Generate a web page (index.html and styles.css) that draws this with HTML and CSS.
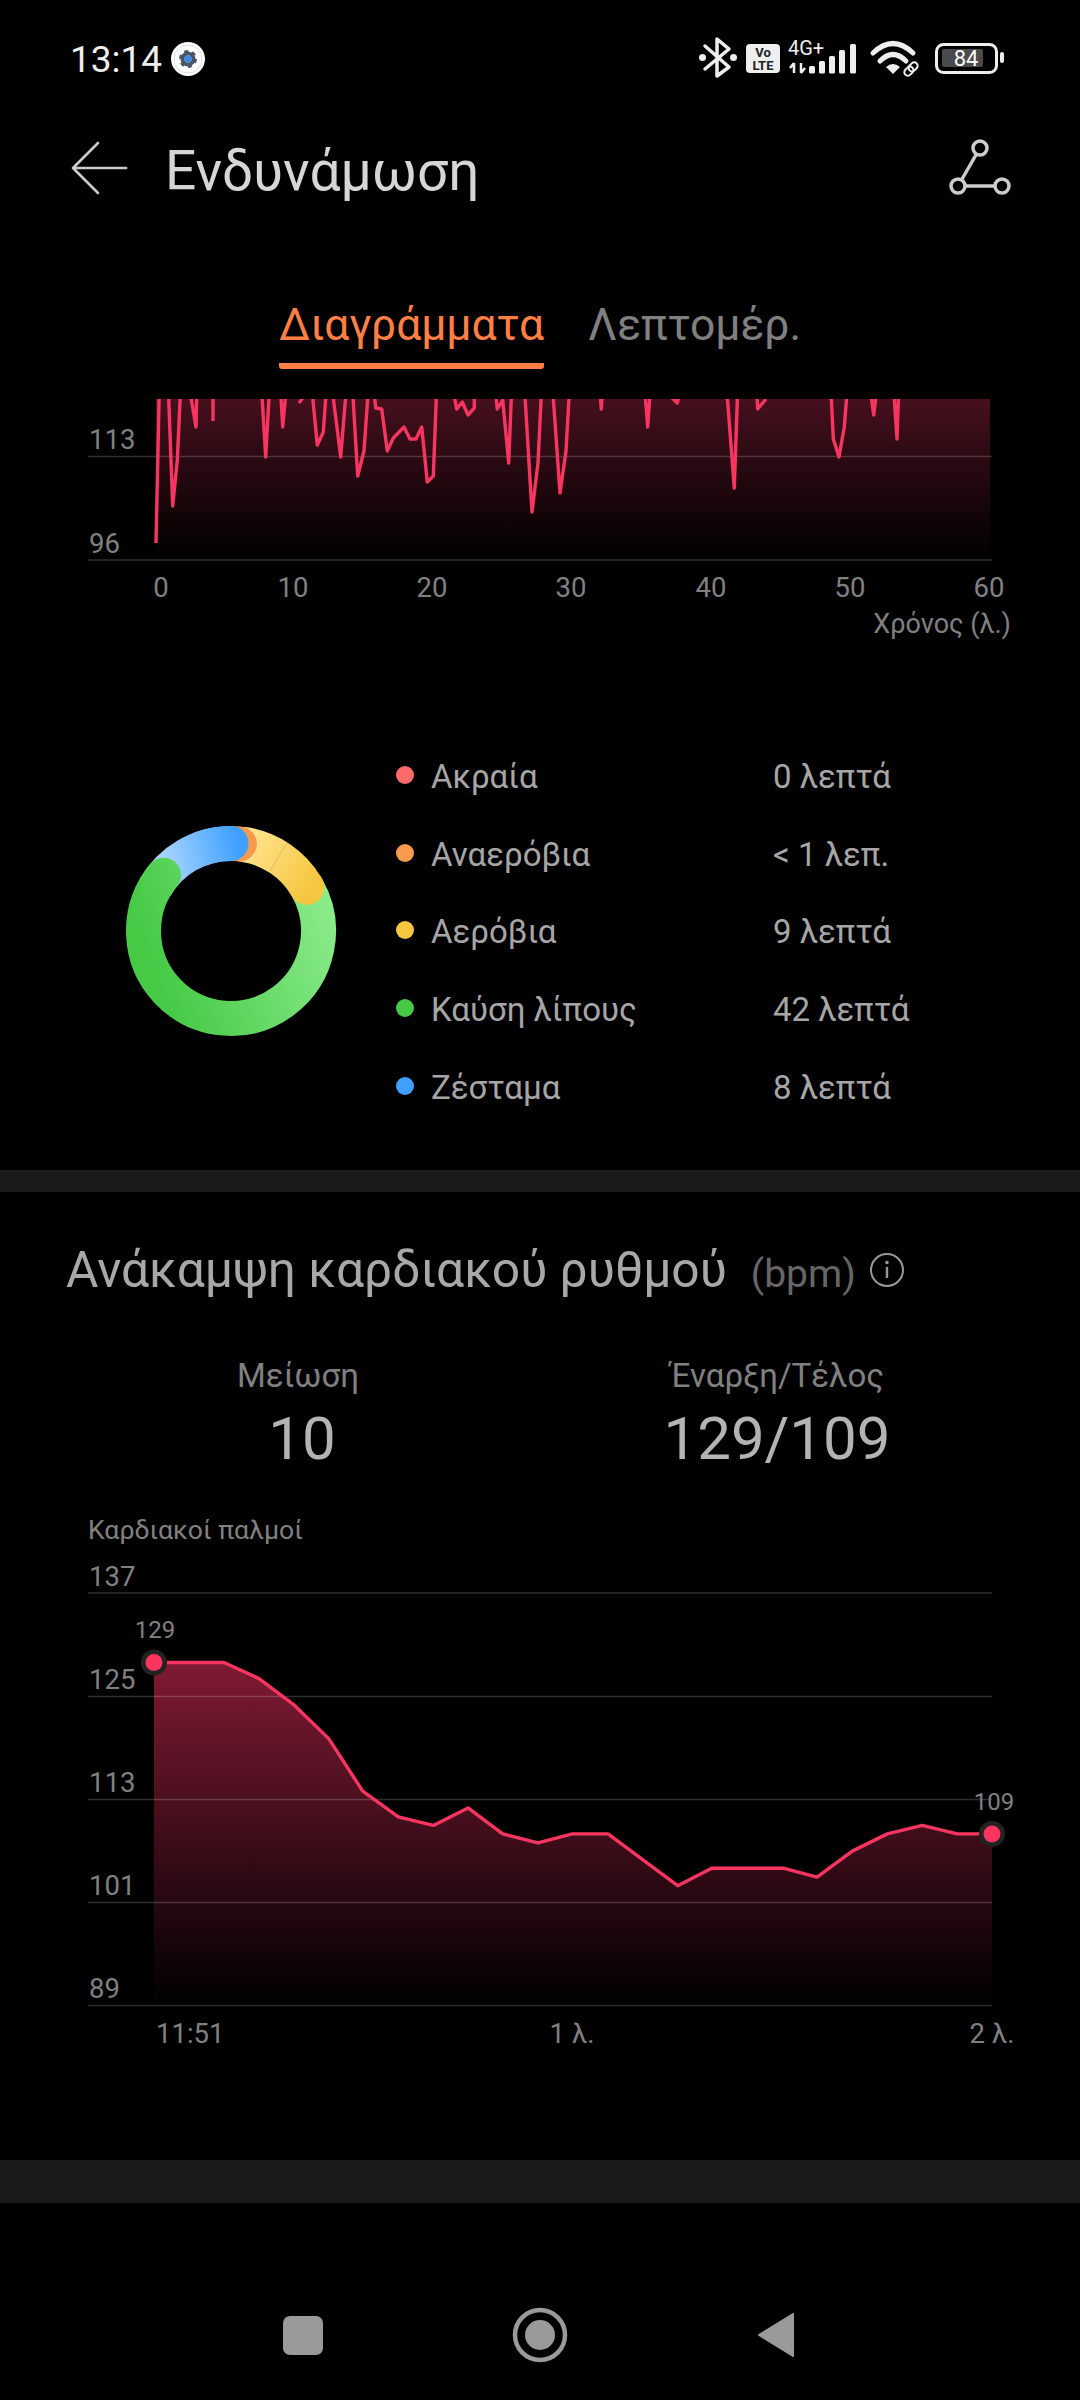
FILE: index.html
```html
<!DOCTYPE html>
<html lang="el">
<head>
    <meta charset="UTF-8">
    <meta name="viewport" content="width=device-width, initial-scale=1.0">
    <title>Ενδυνάμωση</title>
    <link rel="stylesheet" href="styles.css">
</head>
<body>
    <div class="status-bar">
        <span class="clock">13:14</span>
        <svg class="gear" width="36" height="36" viewBox="0 0 36 36">
            <circle cx="18" cy="18" r="17" fill="#fff"/>
            <circle cx="18" cy="18" r="14" fill="none" stroke="#ddd" stroke-width="1"/>
            <circle cx="18" cy="18" r="5.5" fill="none" stroke="#4a5568" stroke-width="4"/>
            <circle cx="18" cy="18" r="7.5" fill="none" stroke="#4a5568" stroke-width="3" stroke-dasharray="3.9 3.95"/>
            <circle cx="18" cy="18" r="3.8" fill="#3f8ae0"/>
        </svg>
        <svg class="status-icons" width="320" height="60" viewBox="690 30 320 60">
            <!-- bluetooth -->
            <path d="M705 47 L729 68 L717 77 L717 40 L729 50 L705 70" fill="none" stroke="#eee" stroke-width="3.5" stroke-linejoin="round" stroke-linecap="round"/>
            <circle cx="702.5" cy="58.5" r="3.5" fill="#eee"/>
            <circle cx="733.5" cy="58.5" r="3.5" fill="#eee"/>
            <!-- volte -->
            <rect x="746" y="45" width="34" height="29" rx="4" fill="#eee"/>
            <text x="763" y="58" class="volte">Vo</text>
            <text x="763" y="71" class="volte">LTE</text>
            <!-- signal -->
            <text x="788" y="56" class="net">4G+</text>
            <path d="M794 64 V74 M790 69 L794 64 M801 64 V74 M801 74 L805 69" fill="none" stroke="#eee" stroke-width="2.5"/>
            <rect x="809" y="67" width="6" height="7.5" rx="1.5" fill="#eee"/>
            <rect x="819" y="62" width="6" height="12.5" rx="1.5" fill="#eee"/>
            <rect x="829" y="57" width="6" height="17.5" rx="1.5" fill="#eee"/>
            <rect x="839" y="51" width="6" height="23.5" rx="1.5" fill="#eee"/>
            <rect x="850" y="45" width="6" height="29.5" rx="1.5" fill="#eee"/>
            <!-- wifi -->
            <path d="M873 54 Q893 35 913 54" fill="none" stroke="#eee" stroke-width="5" stroke-linecap="round"/>
            <path d="M880 62 Q893 49 906 62" fill="none" stroke="#eee" stroke-width="5" stroke-linecap="round"/>
            <path d="M886 68 Q893 62 900 68 L893 75 Z" fill="#eee"/>
            <g transform="rotate(-45 911 70)" fill="none" stroke="#eee" stroke-width="2">
                <rect x="903" y="66.5" width="10" height="7" rx="3.5"/>
                <rect x="909" y="66.5" width="10" height="7" rx="3.5"/>
            </g>
            <!-- battery -->
            <rect x="936.5" y="45.5" width="60" height="28" rx="7" fill="none" stroke="#eee" stroke-width="3"/>
            <rect x="942" y="50" width="41" height="18" rx="2" fill="#4a4a4a"/>
            <text x="966" y="67" class="batt">84</text>
            <rect x="1000" y="53" width="4" height="11" rx="2" fill="#eee"/>
        </svg>
    </div>

    <div class="app-bar">
        <svg width="60" height="56" viewBox="0 0 60 56">
            <path d="M28 3 L3 28 L28 53 M3 28 H56" fill="none" stroke="#ccc" stroke-width="2.6" stroke-linecap="round" stroke-linejoin="round"/>
        </svg>
        <h1 class="page-title">Ενδυνάμωση</h1>
        <svg class="route" width="66" height="60" viewBox="0 0 66 60">
            <circle cx="33" cy="10" r="7" fill="none" stroke="#ccc" stroke-width="3.5"/>
            <circle cx="11" cy="48" r="7" fill="none" stroke="#ccc" stroke-width="3.5"/>
            <circle cx="55" cy="48" r="7" fill="none" stroke="#ccc" stroke-width="3.5"/>
            <path d="M29.5 16 L14.5 42 M18 48 H48" fill="none" stroke="#ccc" stroke-width="3.5"/>
        </svg>
    </div>

    <div class="tabs">
        <div class="tab active">Διαγράμματα</div>
        <div class="tab">Λεπτομέρ.</div>
    </div>

    <svg class="chart-top" width="1080" height="251" viewBox="0 399 1080 251">
        <defs>
            <linearGradient id="fillTop" x1="0" y1="399" x2="0" y2="560" gradientUnits="userSpaceOnUse">
                <stop offset="0" stop-color="#45101d"/>
                <stop offset="1" stop-color="#000"/>
            </linearGradient>
        </defs>
        <rect x="156" y="399" width="834" height="161" fill="url(#fillTop)"/>
        <line x1="88" y1="456.5" x2="992" y2="456.5" class="grid"/>
        <line x1="88" y1="560" x2="992" y2="560" class="grid"/>
        <path class="hr-line" d="M156 543 L159.5 380
            M168 380 L172.7 506 L177.3 460 L181 380
            M188 380 L196 427 L197 380
            M213 380 L213 421
            M261 380 L265.7 457 L270 380
            M280 380 L282.7 427 L287 380
            M299 403 L304 396
            M311 380 L317.3 445 L323.3 432 L327 380
            M331 380 L340.7 457 L347 380
            M352 380 L357.7 476 L364 451 L369 380
            M373 380 L375.7 408 L381.7 409 L387.3 451 L393.3 438 L404 427 L410 439 L416 439 L421.7 427 L427.3 482 L433.3 476 L437 380
            M453 390 L456.7 409 L462.3 402 L468 415 L474.3 408 L474.3 380
            M494 380 L497.3 409 L502.7 400 L508.7 463 L512 380
            M524 380 L532 512 L538 463 L542 380
            M552 380 L560 493 L566 451 L570 380
            M599 380 L601.3 409 L603 380
            M644 380 L647.7 427 L651 380
            M670 396 L677.3 403 L679 396
            M726 380 L734.3 488 L738 380
            M756 380 L757.7 409 L766 399
            M830.5 380 L833.3 439 L839 457 L844.3 427 L848 380
            M869 380 L873.7 415 L878 380
            M893 380 L897 439 L899 380"/>
        <text x="89" y="449" class="axis">113</text>
        <text x="89" y="553" class="axis">96</text>
        <text x="161" y="597" class="axis mid">0</text>
        <text x="293" y="597" class="axis mid">10</text>
        <text x="432" y="597" class="axis mid">20</text>
        <text x="571" y="597" class="axis mid">30</text>
        <text x="711" y="597" class="axis mid">40</text>
        <text x="850" y="597" class="axis mid">50</text>
        <text x="989" y="597" class="axis mid">60</text>
        <text x="1011" y="633" class="axis axis-title end">Χρόνος (λ.)</text>
    </svg>

    <div class="zones">
        <svg class="donut" width="220" height="220" viewBox="121 821 220 220">
            <defs>
                <linearGradient id="greenArc" x1="330" y1="860" x2="140" y2="930" gradientUnits="userSpaceOnUse">
                    <stop offset="0" stop-color="#90ee90"/>
                    <stop offset="1" stop-color="#46ca46"/>
                </linearGradient>
                <linearGradient id="blueArc" x1="165" y1="870" x2="240" y2="850" gradientUnits="userSpaceOnUse">
                    <stop offset="0" stop-color="#a9d6ff"/>
                    <stop offset="1" stop-color="#3fa0ff"/>
                </linearGradient>
                <linearGradient id="yellowArc" x1="245" y1="845" x2="310" y2="890" gradientUnits="userSpaceOnUse">
                    <stop offset="0" stop-color="#ffe38d"/>
                    <stop offset="1" stop-color="#f6c640"/>
                </linearGradient>
            </defs>
            <path d="M155.2 887.25 A87.5 87.5 0 0 1 231 843.5" class="arc" stroke="url(#blueArc)"/>
            <path d="M306.8 887.25 A87.5 87.5 0 1 1 163.6 875.2" class="arc round" stroke="url(#greenArc)"/>
            <path d="M243.2 844.4 A87.5 87.5 0 0 1 306.8 887.25" class="arc round" stroke="url(#yellowArc)"/>
            <line x1="270" y1="870.7" x2="287.3" y2="842.7" stroke="#8f7a3a" stroke-width="0.7" stroke-opacity="0.4"/>
            <path d="M231 843.5 A87.5 87.5 0 0 1 239.4 843.9" class="arc round" stroke="#f79a50"/>
            <path d="M201.1 848.8 A87.5 87.5 0 0 1 231 843.5" class="arc round" stroke="url(#blueArc)"/>
        </svg>
        <ul class="legend">
            <li class="legend-row"><span class="dot dot-red"></span><span class="zone-name">Ακραία</span><span class="zone-time">0 λεπτά</span></li>
            <li class="legend-row"><span class="dot dot-orange"></span><span class="zone-name">Αναερόβια</span><span class="zone-time">&lt; 1 λεπ.</span></li>
            <li class="legend-row"><span class="dot dot-yellow"></span><span class="zone-name">Αερόβια</span><span class="zone-time">9 λεπτά</span></li>
            <li class="legend-row"><span class="dot dot-green"></span><span class="zone-name">Καύση λίπους</span><span class="zone-time">42 λεπτά</span></li>
            <li class="legend-row"><span class="dot dot-blue"></span><span class="zone-name">Ζέσταμα</span><span class="zone-time">8 λεπτά</span></li>
        </ul>
    </div>

    <div class="divider"></div>

    <div class="recovery">
        <div class="section-head">
            <h2 class="section-title">Ανάκαμψη καρδιακού ρυθμού</h2>
            <span class="unit">(bpm)</span>
            <svg class="info" width="36" height="36" viewBox="0 0 36 36">
                <circle cx="18" cy="18" r="16" fill="none" stroke="#999" stroke-width="2"/>
                <circle cx="18" cy="10.5" r="1.8" fill="#999"/>
                <path d="M18 15 V26" stroke="#999" stroke-width="2.4"/>
            </svg>
        </div>
        <div class="stats">
            <div class="stat stat-left">
                <div class="stat-label">Μείωση</div>
                <div class="stat-value">10</div>
            </div>
            <div class="stat stat-right">
                <div class="stat-label">Έναρξη/Τέλος</div>
                <div class="stat-value">129/109</div>
            </div>
        </div>
        <div class="chart-label">Καρδιακοί παλμοί</div>
        <svg class="chart-bottom" width="1080" height="510" viewBox="0 1550 1080 510">
            <defs>
                <linearGradient id="fillBottom" x1="0" y1="1662" x2="0" y2="2005" gradientUnits="userSpaceOnUse">
                    <stop offset="0" stop-color="#7f1a33"/>
                    <stop offset="1" stop-color="#000"/>
                </linearGradient>
            </defs>
            <path fill="url(#fillBottom)" d="M154 2005 L154 1662.5 L224 1662.5 L259 1678.6 L293.3 1704.3 L328.7 1738.6 L362.7 1791.1 L398.3 1816.8 L433.3 1825.4 L468 1807.9 L502.7 1833.9 L538 1842.9 L572.3 1833.9 L608 1833.9 L677.7 1885.7 L711.7 1868.2 L783.3 1868.2 L817 1877.1 L852.3 1851.1 L887.3 1833.9 L922.3 1825.4 L957.3 1833.9 L992 1833.9 L992 2005 Z"/>
            <line x1="88" y1="1593" x2="992" y2="1593" class="grid"/>
            <line x1="88" y1="1696.5" x2="992" y2="1696.5" class="grid"/>
            <line x1="88" y1="1799.5" x2="992" y2="1799.5" class="grid"/>
            <line x1="88" y1="1902.5" x2="992" y2="1902.5" class="grid"/>
            <line x1="88" y1="2005.5" x2="992" y2="2005.5" class="grid"/>
            <polyline class="hr-line" points="154,1662.5 224,1662.5 259,1678.6 293.3,1704.3 328.7,1738.6 362.7,1791.1 398.3,1816.8 433.3,1825.4 468,1807.9 502.7,1833.9 538,1842.9 572.3,1833.9 608,1833.9 677.7,1885.7 711.7,1868.2 783.3,1868.2 817,1877.1 852.3,1851.1 887.3,1833.9 922.3,1825.4 957.3,1833.9 992,1833.9"/>
            <text x="89" y="1586" class="axis">137</text>
            <text x="89" y="1689" class="axis">125</text>
            <text x="89" y="1792" class="axis">113</text>
            <text x="89" y="1895" class="axis">101</text>
            <text x="89" y="1998" class="axis">89</text>
            <text x="155" y="1637.5" class="point-label mid">129</text>
            <text x="994" y="1810" class="point-label mid">109</text>
            <circle cx="154" cy="1662.5" r="13" fill="#222"/>
            <circle cx="154" cy="1662.5" r="8.5" fill="#ff3560"/>
            <circle cx="992" cy="1833.9" r="13" fill="#222"/>
            <circle cx="992" cy="1833.9" r="8.5" fill="#ff3560"/>
            <text x="156" y="2043" class="axis">11:51</text>
            <text x="572" y="2043" class="axis mid">1 λ.</text>
            <text x="992" y="2043" class="axis mid">2 λ.</text>
        </svg>
    </div>

    <div class="divider divider-wide"></div>

    <div class="nav-bar">
        <div class="nav-square"></div>
        <svg width="56" height="56" viewBox="0 0 56 56">
            <circle cx="28" cy="28" r="25" fill="none" stroke="#9a9a9a" stroke-width="4.5"/>
            <circle cx="28" cy="28" r="15" fill="#9a9a9a"/>
        </svg>
        <svg width="38" height="46" viewBox="0 0 38 46">
            <path d="M36 2 L2 23 L36 44 Z" fill="#9a9a9a" stroke="#9a9a9a" stroke-width="2" stroke-linejoin="round"/>
        </svg>
    </div>
</body>
</html>
```

FILE: styles.css
```css
* {
    box-sizing: border-box;
}
body {
    font-family: Roboto, "Noto Sans", sans-serif;
    margin: 0;
    width: 1080px;
    height: 2400px;
    overflow: hidden;
    background-color: #000;
    color: #fff;
}
svg {
    display: block;
    flex: none;
}
.status-bar {
    height: 118px;
    display: flex;
    align-items: center;
    padding-left: 70px;
}
.clock {
    font-size: 37px;
    color: #eee;
}
.gear {
    margin-left: 8px;
}
.status-icons {
    margin-left: auto;
    margin-right: 70px;
}
.volte {
    font-size: 13px;
    font-weight: 700;
    fill: #222;
    text-anchor: middle;
}
.net {
    font-size: 20px;
    fill: #eee;
}
.batt {
    font-size: 22px;
    fill: #fff;
    text-anchor: middle;
}
.app-bar {
    height: 100px;
    display: flex;
    align-items: center;
    padding: 0 67px 0 70px;
}
.page-title {
    margin: 6px 0 0 35px;
    font-size: 55px;
    font-weight: 400;
    color: #d6d6d6;
}
.route {
    margin-left: auto;
}
.tabs {
    height: 181px;
    display: flex;
    align-items: flex-start;
    padding: 74px 0 0 279px;
    gap: 44px;
}
.tab {
    font-size: 44.3px;
    line-height: 66px;
    color: #808080;
    padding-bottom: 5px;
}
.tab.active {
    color: #ff7f45;
    border-bottom: 6px solid #ff7f45;
    border-radius: 3px;
}
.grid {
    stroke: rgba(255, 255, 255, 0.18);
    stroke-width: 1.5;
}
.hr-line {
    fill: none;
    stroke: #f73560;
    stroke-width: 3.4;
    stroke-linejoin: round;
}
.axis {
    font-size: 27.5px;
    fill: #808080;
}
.axis-title {
    font-size: 27px;
}
.point-label {
    font-size: 24px;
    fill: #808080;
}
.mid {
    text-anchor: middle;
}
.end {
    text-anchor: end;
}
.zones {
    height: 520px;
    display: flex;
    align-items: flex-start;
}
.donut {
    margin: 171px 0 0 121px;
}
.arc {
    fill: none;
    stroke-width: 35;
}
.arc.round {
    stroke-linecap: round;
}
.legend {
    list-style: none;
    margin: 88px 0 0 55px;
    padding: 0;
    flex: 1;
}
.legend-row {
    height: 77.6px;
    display: flex;
    align-items: center;
    font-size: 33px;
    color: #a6a6a6;
}
.dot {
    width: 18px;
    height: 18px;
    border-radius: 50%;
    margin: -3px 17px 0 0;
}
.dot-red { background-color: #ff6b6b; }
.dot-orange { background-color: #f79a50; }
.dot-yellow { background-color: #f6c640; }
.dot-green { background-color: #46ca46; }
.dot-blue { background-color: #3fa0ff; }
.zone-name {
    width: 342px;
}
.divider {
    height: 22px;
    background-color: #1a1a1a;
}
.divider-wide {
    height: 43px;
}
.recovery {
    height: 968px;
}
.section-head {
    display: flex;
    align-items: baseline;
    padding: 50px 0 0 66px;
}
.section-title {
    margin: 0;
    font-size: 49.7px;
    line-height: 56px;
    font-weight: 400;
    color: #a8a8a8;
}
.unit {
    margin-left: 24px;
    font-size: 39px;
    color: #666;
}
.info {
    align-self: center;
    margin-left: 13px;
}
.stats {
    display: flex;
    margin-top: 58px;
}
.stat {
    text-align: center;
}
.stat-left {
    width: 596px;
}
.stat-left .stat-value {
    padding-left: 8px;
}
.stat-right {
    width: 362px;
}
.stat-label {
    font-size: 33px;
    line-height: 40px;
    color: #808080;
}
.stat-value {
    margin-top: 8px;
    font-size: 60px;
    line-height: 70px;
    color: #b3b3b3;
}
.chart-label {
    margin: 39px 0 3px 88px;
    font-size: 26.6px;
    line-height: 34px;
    color: #808080;
}
.nav-bar {
    height: 197px;
    padding: 104px 0 37px 283px;
    display: flex;
    align-items: center;
    gap: 189px;
}
.nav-square {
    width: 40px;
    height: 39px;
    border-radius: 7px;
    background-color: #9a9a9a;
}
```
